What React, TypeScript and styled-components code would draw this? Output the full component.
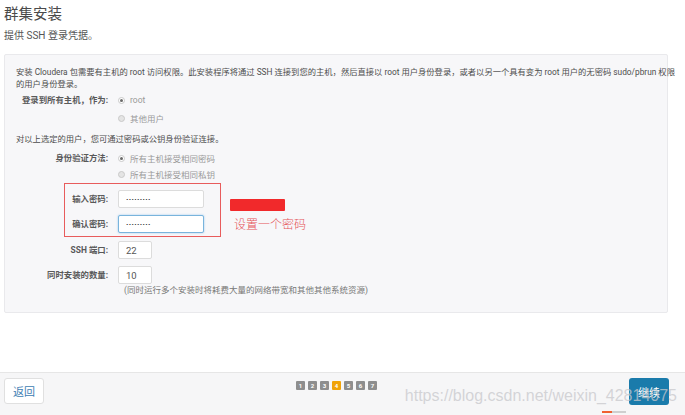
import React from "react";
import styled, { createGlobalStyle } from "styled-components";

const GlobalStyle = createGlobalStyle`
  html, body { margin: 0; padding: 0; background: #ffffff; }
  body {
    font-family: "Roboto", "Noto Sans CJK SC", "Noto Sans", sans-serif;
    color: #555;
  }
  * { box-sizing: border-box; }
`;

const Page = styled.div`
  position: relative;
  width: 685px;
  height: 415px;
  display: flex;
  flex-direction: column;
  overflow: hidden;
`;

const Header = styled.header`
  padding: 5px 0 0 4px;
`;

const Title = styled.h1`
  margin: 0;
  font-size: 14.5px;
  line-height: 20px;
  font-weight: normal;
  color: #4a4a4a;
`;

const Subtitle = styled.p`
  margin: 4px 0 0;
  font-size: 10px;
  line-height: 14px;
  color: #555;
`;

const Panel = styled.section`
  margin: 11px 0 0 4px;
  width: 664px;
  padding: 11px 8px 16px 11px;
  background: #f7f7f9;
  border: 1px solid #e9e9ec;
  border-radius: 2px;
`;

const Text = styled.p<{ $mt?: number; $lh?: number }>`
  margin: ${(p) => p.$mt ?? 0}px 0 0;
  font-size: 8.3px;
  line-height: ${(p) => p.$lh ?? 12}px;
  color: #4d4d4d;
  white-space: nowrap;
`;

const Row = styled.div<{ $mt?: number }>`
  display: flex;
  align-items: flex-start;
  gap: 10px;
  margin-top: ${(p) => p.$mt ?? 0}px;
`;

const Label = styled.div<{ $lh?: number }>`
  width: 92px;
  flex: none;
  text-align: right;
  font-size: 8.4px;
  line-height: ${(p) => p.$lh ?? 16}px;
  font-weight: bold;
  color: #595959;
  white-space: nowrap;
`;

const Options = styled.div<{ $gap?: number }>`
  display: flex;
  flex-direction: column;
  gap: ${(p) => p.$gap ?? 0}px;
`;

const Option = styled.label`
  display: flex;
  align-items: center;
  height: 16px;
  font-size: 8.5px;
  color: #9a9a9a;
`;

const RadioDot = styled.span<{ $on?: boolean }>`
  width: 7px;
  height: 7px;
  margin: 0 5px 0 0;
  border-radius: 50%;
  border: 1px solid #c9c9c9;
  background: ${(p) => (p.$on ? "#fff" : "#e4e4e4")};
  position: relative;
  &::after {
    content: "";
    display: ${(p) => (p.$on ? "block" : "none")};
    position: absolute;
    left: 1px;
    top: 1px;
    width: 3px;
    height: 3px;
    border-radius: 50%;
    background: #6a6a6a;
  }
`;

const Field = styled.input<{ $w: number; $focus?: boolean }>`
  width: ${(p) => p.$w}px;
  height: 18px;
  margin: 0;
  padding: 0 7px;
  border: 1px solid ${(p) => (p.$focus ? "#79b4dc" : "#dcdcdc")};
  box-shadow: ${(p) => (p.$focus ? "0 0 2px rgba(102,175,233,0.7)" : "none")};
  border-radius: 2px;
  background: #fff;
  font-family: "Roboto", sans-serif;
  font-size: 9.5px;
  color: #555;
  outline: none;
  &[type="password"] {
    font-family: "DejaVu Sans", sans-serif;
    font-size: 4px;
    letter-spacing: 0.4px;
    color: #333;
  }
`;

const PasswordGroup = styled.div`
  position: relative;
  margin-top: 8px;
`;

const RedBox = styled.div`
  position: absolute;
  left: 48px;
  top: -7px;
  width: 157px;
  height: 54px;
  border: 1.5px solid #e85c5c;
  pointer-events: none;
`;

const RedBar = styled.div`
  position: absolute;
  left: 214px;
  top: 9px;
  width: 55px;
  height: 12px;
  background: #f1292b;
  border-radius: 1px;
`;

const RedNote = styled.div`
  position: absolute;
  left: 218px;
  top: 27px;
  font-size: 12px;
  line-height: 16px;
  color: #e5545a;
  font-weight: 300;
`;

const Hint = styled.p`
  margin: 0 0 0 108px;
  font-size: 8.5px;
  line-height: 12px;
  color: #777;
`;

const Footer = styled.footer`
  position: relative;
  margin-top: auto;
  height: 43px;
  padding: 5px 16px 0 4px;
  background: #f6f6f7;
  border-top: 1px solid #e6e6e6;
  display: flex;
  align-items: flex-start;
  justify-content: space-between;
`;

const BackButton = styled.button`
  width: 40px;
  height: 26px;
  padding: 0;
  border: 1px solid #e0e0e0;
  border-radius: 3px;
  background: #fff;
  font-family: "Noto Sans CJK SC", sans-serif;
  font-size: 11px;
  color: #3d7db2;
`;

const NextButton = styled.button`
  width: 40px;
  height: 27px;
  padding: 0;
  border: none;
  border-radius: 3px;
  background: #1a7bab;
  font-family: "Noto Sans CJK SC", sans-serif;
  font-size: 11px;
  color: #fff;
`;

const Steps = styled.div`
  display: flex;
  gap: 3px;
  margin-top: 3px;
`;

const Step = styled.span<{ $on?: boolean }>`
  width: 9px;
  height: 9px;
  border-radius: 1px;
  background: ${(p) => (p.$on ? "#f0a30a" : "#8e8e8e")};
  color: #fff;
  font-family: "Roboto", sans-serif;
  font-size: 6px;
  font-weight: bold;
  line-height: 9px;
  text-align: center;
`;

const Watermark = styled.div`
  position: absolute;
  right: 8px;
  top: 14px;
  font-family: "Liberation Sans", Arial, sans-serif;
  font-size: 16px;
  line-height: 18px;
  color: rgba(200, 200, 204, 0.75);
  pointer-events: none;
  white-space: nowrap;
`;

const ArrowBit = styled.div`
  position: absolute;
  left: 602px;
  bottom: 2px;
  width: 24px;
  height: 2px;
  background: linear-gradient(90deg, #f06030 0 40%, #cfcfcf 40% 100%);
`;

export default function App() {
  const steps = [1, 2, 3, 4, 5, 6, 7];
  return (
    <Page>
      <GlobalStyle />
      <Header>
        <Title>群集安装</Title>
        <Subtitle>提供 SSH 登录凭据。</Subtitle>
      </Header>
      <Panel>
        <Text>
          安装 Cloudera 包需要有主机的 root 访问权限。此安装程序将通过 SSH 连接到您的主机，然后直接以 root
          用户身份登录，或者以另一个具有变为 root 用户的无密码 sudo/pbrun 权限
          <br />
          的用户身份登录。
        </Text>
        <Row $mt={2}>
          <Label>登录到所有主机，作为:</Label>
          <Options $gap={2}>
            <Option>
              <RadioDot $on />
              root
            </Option>
            <Option>
              <RadioDot />
              其他用户
            </Option>
          </Options>
        </Row>
        <Text $mt={6} $lh={14}>
          对以上选定的用户，您可通过密码或公钥身份验证连接。
        </Text>
        <Row $mt={4}>
          <Label>身份验证方法:</Label>
          <Options>
            <Option>
              <RadioDot $on />
              所有主机接受相同密码
            </Option>
            <Option>
              <RadioDot />
              所有主机接受相同私钥
            </Option>
          </Options>
        </Row>
        <PasswordGroup>
          <Row>
            <Label $lh={18}>输入密码:</Label>
            <Field type="password" $w={86} defaultValue="123456789" readOnly />
          </Row>
          <Row $mt={7}>
            <Label $lh={18}>确认密码:</Label>
            <Field type="password" $w={86} $focus defaultValue="123456789" readOnly />
          </Row>
          <RedBox />
          <RedBar />
          <RedNote>设置一个密码</RedNote>
        </PasswordGroup>
        <Row $mt={8}>
          <Label $lh={18}>SSH 端口:</Label>
          <Field $w={34} defaultValue="22" readOnly />
        </Row>
        <Row $mt={7}>
          <Label $lh={18}>同时安装的数量:</Label>
          <Field $w={34} defaultValue="10" readOnly />
        </Row>
        <Hint>(同时运行多个安装时将耗费大量的网络带宽和其他其他系统资源)</Hint>
      </Panel>
      <Footer>
        <BackButton>返回</BackButton>
        <Steps>
          {steps.map((n) => (
            <Step key={n} $on={n === 4}>
              {n}
            </Step>
          ))}
        </Steps>
        <NextButton>继续</NextButton>
        <Watermark>https://blog.csdn.net/weixin_42814075</Watermark>
        <ArrowBit />
      </Footer>
    </Page>
  );
}
